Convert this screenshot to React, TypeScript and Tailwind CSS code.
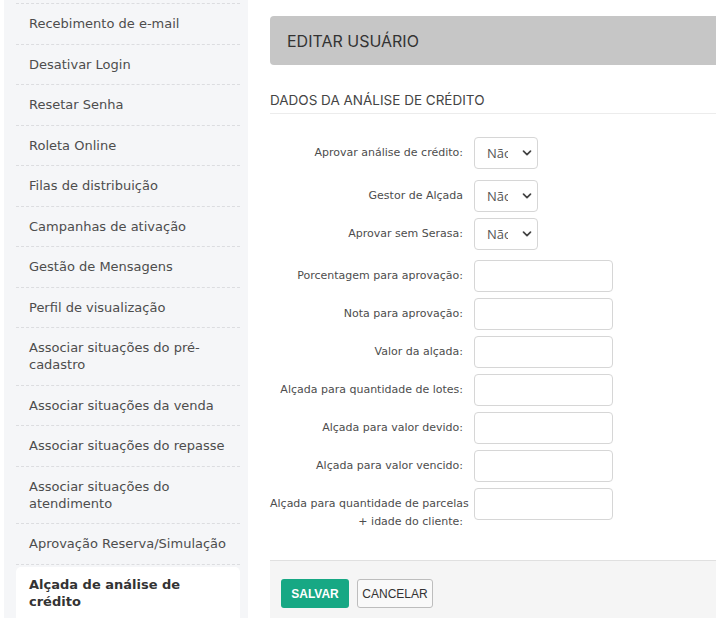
import React from "react";

const menu: string[][] = [
  ["Recebimento de e-mail"],
  ["Desativar Login"],
  ["Resetar Senha"],
  ["Roleta Online"],
  ["Filas de distribuição"],
  ["Campanhas de ativação"],
  ["Gestão de Mensagens"],
  ["Perfil de visualização"],
  ["Associar situações do pré-", "cadastro"],
  ["Associar situações da venda"],
  ["Associar situações do repasse"],
  ["Associar situações do", "atendimento"],
  ["Aprovação Reserva/Simulação"],
];

const selects = [
  { label: "Aprovar análise de crédito:", mt: "mt-[23px]" },
  { label: "Gestor de Alçada", mt: "mt-[11px]" },
  { label: "Aprovar sem Serasa:", mt: "mt-[6px]" },
];

const inputs = [
  { label: ["Porcentagem para aprovação:"], mt: "mt-[10px]" },
  { label: ["Nota para aprovação:"], mt: "mt-[6px]" },
  { label: ["Valor da alçada:"], mt: "mt-[6px]" },
  { label: ["Alçada para quantidade de lotes:"], mt: "mt-[6px]" },
  { label: ["Alçada para valor devido:"], mt: "mt-[6px]" },
  { label: ["Alçada para valor vencido:"], mt: "mt-[6px]" },
  { label: ["Alçada para quantidade de parcelas", "+ idade do cliente:"], mt: "mt-[6px]" },
];

function Label({ lines }: { lines: string[] }) {
  return (
    <div className="w-[193px] shrink-0 pt-[7px] text-right text-[11px] leading-[18px] text-[#4d4d4d]">
      {lines.map((l, i) => (
        <div key={i} className="whitespace-nowrap">{l}</div>
      ))}
    </div>
  );
}

export default function App() {
  return (
    <div
      className="flex h-[618px] w-[718px] overflow-hidden bg-white"
      style={{ fontFamily: "'DejaVu Sans', Verdana, sans-serif" }}
    >
      {/* SIDEBAR */}
      <aside className="ml-[4px] w-[244px] shrink-0 bg-[#f5f6f8] pl-[12px] pr-[8px] pt-[3px]">
        <ul className="border-t border-dashed border-[#dcdde0]">
          {menu.map((lines, i) => (
            <li
              key={i}
              className="border-b border-dashed border-[#dcdde0] px-[13px] py-[11.25px] text-[13px] leading-[17px] text-[#4d4d4d]"
            >
              {lines.map((l, j) => (
                <div key={j} className="whitespace-nowrap">{l}</div>
              ))}
            </li>
          ))}
          <li className="mt-[2px] rounded-[5px] bg-white px-[13px] pt-[9px] pb-[12px] text-[13px] font-bold leading-[17px] text-[#333]">
            <div>Alçada de análise de</div>
            <div>crédito</div>
          </li>
        </ul>
      </aside>

      {/* MAIN */}
      <main className="ml-[22px] mr-[2px] flex min-w-0 flex-1 flex-col">
        <div
          className="mt-[16px] flex h-[49px] items-center rounded-l-[4px] bg-[#c6c6c6] pl-[17px] text-[16px] text-[#333]"
          style={{ fontFamily: "Inter, 'Open Sans', sans-serif" }}
        >
          EDITAR USUÁRIO
        </div>

        <div
          className="mt-[25px] border-b border-[#ececec] pb-[3px] text-[13.5px] text-[#444]"
          style={{ fontFamily: "Inter, 'Open Sans', sans-serif" }}
        >
          DADOS DA ANÁLISE DE CRÉDITO
        </div>

        {selects.map((s, i) => (
          <div key={i} className={`flex items-start ${s.mt}`}>
            <Label lines={[s.label]} />
            <div className="ml-[11px] flex h-[32px] w-[64px] items-center rounded-[4px] border border-[#d6d6d6] bg-white pl-[12px]">
              <span
                className="w-[21px] overflow-hidden whitespace-nowrap text-[13px] text-[#555]"
                style={{ fontFamily: "'Open Sans', sans-serif" }}
              >
                Não
              </span>
              <svg className="ml-[14px] h-[10px] w-[10px] text-[#444]" viewBox="0 0 10 10" fill="none">
                <path d="M1.5 3.2 5 6.7 8.5 3.2" stroke="currentColor" strokeWidth="1.7" strokeLinecap="round" strokeLinejoin="round" />
              </svg>
            </div>
          </div>
        ))}

        {inputs.map((r, i) => (
          <div key={i} className={`flex items-start ${r.mt}`}>
            <Label lines={r.label} />
            <input
              type="text"
              className="ml-[11px] h-[32px] w-[139px] rounded-[4px] border border-[#d6d6d6] bg-white outline-none"
            />
          </div>
        ))}

        <div className="mt-[29px] flex flex-1 gap-[8px] border-t border-[#e0e0e0] bg-[#f5f5f5] pl-[11px] pt-[18px]">
          <button
            className="h-[29px] w-[68px] rounded-[3px] bg-[#17a884] text-[12px] font-bold text-white"
            style={{ fontFamily: "'Liberation Sans', Arial, sans-serif" }}
          >
            SALVAR
          </button>
          <button
            className="h-[29px] w-[76px] rounded-[3px] border border-[#bdbdbd] bg-[#f9f9f9] text-[12px] text-[#333]"
            style={{ fontFamily: "'Liberation Sans', Arial, sans-serif" }}
          >
            CANCELAR
          </button>
        </div>
      </main>
    </div>
  );
}
